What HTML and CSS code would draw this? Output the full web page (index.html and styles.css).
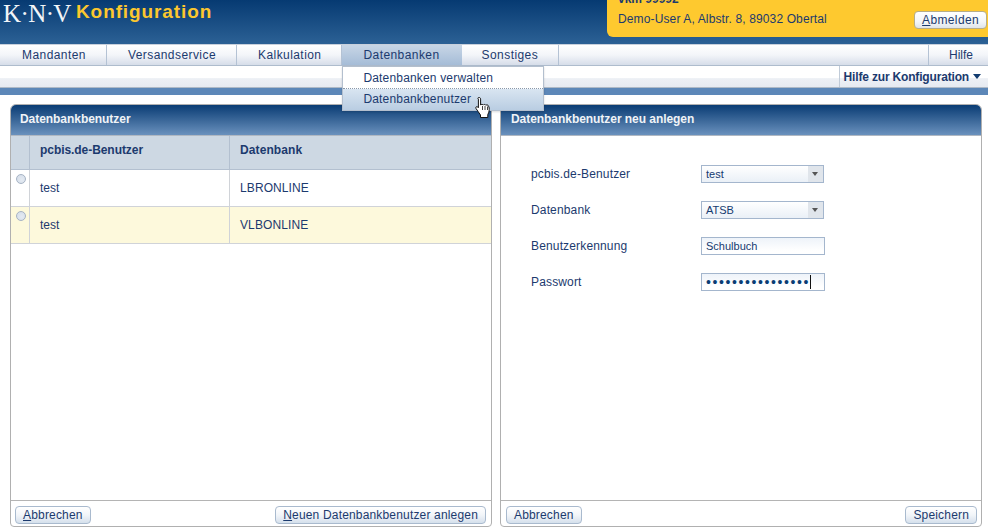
FILE: index.html
```html
<!DOCTYPE html>
<html lang="de">
<head>
<meta charset="utf-8">
<title>KNV Konfiguration</title>
<link rel="stylesheet" href="styles.css">
</head>
<body>
<div class="app">
  <header class="top">
    <div class="brand"><span class="logo">K·N·V</span><span class="title">Konfiguration</span></div>
    <div class="user">
      <div class="user-id">vkm 99992</div>
      <div class="user-row"><span>Demo-User A, Albstr. 8, 89032 Obertal</span><button class="btn logout"><u>A</u>bmelden</button></div>
    </div>
  </header>
  <nav class="nav">
    <div class="nav-item">Mandanten</div>
    <div class="nav-item">Versandservice</div>
    <div class="nav-item">Kalkulation</div>
    <div class="nav-item active">Datenbanken
      <div class="menu">
        <div class="menu-item">Datenbanken verwalten</div>
        <div class="menu-item hover">Datenbankbenutzer</div>
        <svg class="hand" width="17" height="24" viewBox="0 0 17 24"><path d="M4 1.500c1 0 1.600.6 1.600 1.600v6c.3-1 2.300-1 2.700 0 .3-.9 2.200-.9 2.600.2.500-.8 2.200-.6 2.500.6.800 1 1 3 .7 5-.2 1.500-.7 2.500-1.300 3.600v3H5.500v-2.500C4 17 2.500 14.500 1 12.500c-.8-1.200.6-2.500 1.800-1.500l.6.7V3.100C2.400 2.100 3 1.500 4 1.500z" fill="#fff" stroke="#111" stroke-width="1"/><path d="M7.500 10v4M10 10v4M12.500 10.500V14" stroke="#111" stroke-width=".8" fill="none"/></svg>
      </div>
    </div>
    <div class="nav-item">Sonstiges</div>
    <div class="nav-item help">Hilfe</div>
  </nav>
  <div class="subnav"><div class="sub-help">Hilfe zur Konfiguration<span class="caret"></span></div></div>
  <div class="strip"></div>
  <main class="main">
    <section class="panel left">
      <h2 class="panel-head">Datenbankbenutzer</h2>
      <div class="panel-body">
        <div class="row thead"><div class="c0"></div><div class="c1">pcbis.de-Benutzer</div><div class="c2">Datenbank</div></div>
        <div class="row"><div class="c0"><span class="radio"></span></div><div class="c1">test</div><div class="c2">LBRONLINE</div></div>
        <div class="row sel"><div class="c0"><span class="radio"></span></div><div class="c1">test</div><div class="c2">VLBONLINE</div></div>
      </div>
      <div class="panel-foot"><button class="btn"><u>A</u>bbrechen</button><button class="btn"><u>N</u>euen Datenbankbenutzer anlegen</button></div>
    </section>
    <section class="panel right">
      <h2 class="panel-head">Datenbankbenutzer neu anlegen</h2>
      <div class="panel-body form">
        <div class="lbl">pcbis.de-Benutzer</div>
        <div class="field select"><span class="val">test</span><span class="arrow"></span></div>
        <div class="lbl">Datenbank</div>
        <div class="field select"><span class="val">ATSB</span><span class="arrow"></span></div>
        <div class="lbl">Benutzerkennung</div>
        <div class="field text"><span class="val">Schulbuch</span></div>
        <div class="lbl">Passwort</div>
        <div class="field text focus"><span class="val dots">••••••••••••••••</span><span class="cursor"></span></div>
      </div>
      <div class="panel-foot"><button class="btn">Abbrechen</button><button class="btn">Speichern</button></div>
    </section>
  </main>
</div>
</body>
</html>
```
FILE: styles.css
```css
* { box-sizing: border-box; }
html, body { margin: 0; padding: 0; }
body { font-family: "Liberation Sans", Arial, sans-serif; font-size: 12px; color: #1c3a6e; background: #fff; overflow: hidden; }
.app { width: 988px; height: 527px; display: flex; flex-direction: column; overflow: hidden; }

.top { height: 44px; flex: none; display: flex; justify-content: space-between; align-items: flex-start; background: linear-gradient(#063a72, #2c6195); }
.brand { display: flex; align-items: flex-start; height: 30px; padding: 0 0 0 3px; }
.logo { font-family: "Liberation Serif", serif; font-size: 25px; line-height: 26px; padding-top: 1px; letter-spacing: -.6px; color: #f2f5f8; width: 73px; white-space: nowrap; }
.title { font-weight: bold; font-size: 19px; line-height: 24px; letter-spacing: .9px; color: #fcc72e; }
.user { width: 381px; height: 37px; background: #fec92f; border-bottom-left-radius: 6px; padding-left: 11px; overflow: hidden; }
.user-id { font-weight: bold; font-size: 12px; line-height: 14px; margin-top: -8px; color: #1c3a6e; }
.user-row { display: flex; justify-content: space-between; align-items: center; padding-right: 1px; margin-top: 5px; line-height: 18px; }
.user-row span { margin-top: -3px; letter-spacing: .13px; }

.nav { height: 22px; flex: none; display: flex; padding-left: 1px; background: linear-gradient(#fff 0, #f3f5f9 50%, #d6dde9 100%); border-top: 1px solid #c8d0dc; border-bottom: 1px solid #aebccd; }
.nav-item { padding: 0 20px 0 21px; line-height: 20px; border-right: 1px solid #b4c2d4; position: relative; font-size: 12px; letter-spacing: .43px; white-space: nowrap; }
.nav-item.active { background: linear-gradient(#c8d6e6, #a5bcd7); border-right: 0; padding-right: 22px; }
.nav-item.active + .nav-item { padding-left: 20px; }
.nav-item.help { margin-left: auto; border-right: 0; border-left: 1px solid #b4c2d4; padding: 0 15px 0 20px; letter-spacing: 0; }

.menu { position: absolute; left: 0; top: 21px; width: 202px; background: #fff; border: 1px solid #b3bfce; z-index: 5; letter-spacing: .17px; box-shadow: 0 1px 2px rgba(0,0,0,.15); }
.menu-item { height: 21px; padding-left: 20px; line-height: 20px; }
.menu-item:first-child { border-bottom: 1px dotted #8a98aa; height: 22px; line-height: 22px; }
.menu-item.hover { background: linear-gradient(#d9e5f1, #b9cde2); }
.hand { position: absolute; left: 132px; top: 29px; }

.subnav { height: 22px; flex: none; display: flex; justify-content: flex-end; background: linear-gradient(#fff 0, #fff 55%, #edf0f5 60%, #e6eaf1 100%); border-bottom: 1px solid #aeb9c6; }
.sub-help { border-left: 1px solid #c0cbd8; padding: 0 7px 0 4px; font-weight: bold; line-height: 23px; letter-spacing: -.17px; color: #1c3a6e; white-space: nowrap; }
.caret { display: inline-block; margin-left: 4px; border: 4.5px solid transparent; border-top: 5px solid #123c70; border-bottom: 0; vertical-align: 2px; }
.strip { height: 7px; flex: none; background: #5c87b8; }

.main { flex: 1; min-height: 0; display: flex; gap: 8px; padding: 9px 6px 0 10px; }
.panel { display: flex; flex-direction: column; border: 1px solid #b0b0b0; border-radius: 6px 6px 4px 4px; overflow: hidden; }
.panel.left { width: 482px; }
.panel.right { width: 482px; }
.panel-head { margin: 0; height: 30px; flex: none; padding-left: 9px; font-size: 12px; line-height: 28px; letter-spacing: -.05px; font-weight: bold; color: #f0f3f7; background: linear-gradient(#0a3c74, #6a91bd); }
.right .panel-head { padding-left: 10px; }
.panel-body { flex: 1; min-height: 0; border-top: 1px solid #b0b8c2; }
.panel-foot { height: 26px; flex: none; border-top: 1px solid #b4b4b4; display: flex; justify-content: space-between; align-items: flex-start; padding: 5px 5px 0 4px; }
.right .panel-foot { padding: 5px 4px 0 5px; }

.row { display: flex; height: 37px; border-bottom: 1px solid #d0d3d8; }
.row > div { line-height: 36px; padding-left: 10px; }
.c0 { width: 19px; flex: none; border-right: 1px solid #d0d3d8; position: relative; }
.c1 { width: 200px; flex: none; border-right: 1px solid #d0d3d8; }
.c2 { flex: 1; letter-spacing: .1px; }
.thead { height: 34px; background: #cdd8e3; border-bottom-color: #b3c0d0; font-weight: bold; letter-spacing: -.06px; }
.row.thead > div { line-height: 28px; border-right-color: #b3c0d0; }
.sel { background: #fdf9dc; }
.radio { position: absolute; left: 5px; top: 4px; width: 10px; height: 10px; border-radius: 50%; border: 1px solid #a6b3c4; background: radial-gradient(circle at 60% 60%, #e4eaf2, #d3dce8); }

.form { display: grid; grid-template-columns: 170px 124px; grid-auto-rows: 18px; row-gap: 18px; padding: 29px 0 0 30px; align-items: center; }
.lbl { letter-spacing: .15px; line-height: 18px; margin-top: -1px; }
.field { height: 18px; border: 1px solid #a4b6cd; background: linear-gradient(#eef3f9, #fff 80%); display: flex; align-items: center; padding-left: 4px; font-size: 11px; color: #153a70; }
.field.select { width: 123px; background: linear-gradient(#fff, #eaf0f7); }
.val { flex: 1; }
.arrow { width: 15px; height: 16px; flex: none; background: #e0e5eb; position: relative; }
.arrow::after { content: ""; position: absolute; left: 4px; top: 6px; border: 3.5px solid transparent; border-top: 4px solid #555; border-bottom: 0; }
.dots { font-size: 14px; letter-spacing: 1.6px; color: #0a3c74; line-height: 16px; white-space: nowrap; flex: none; }
.cursor { width: 1px; height: 14px; background: #111; flex: none; }

.btn { height: 18px; padding: 0 7px; border: 1px solid #a9bace; border-radius: 4px; background: linear-gradient(#fff, #f2f5f9 50%, #d5e0ec); font-family: "Liberation Sans", Arial, sans-serif; font-size: 12px; letter-spacing: .17px; line-height: 16px; color: #1c3a6e; white-space: nowrap; }
.logout { letter-spacing: .36px; background: linear-gradient(#fff, #f4f6f8 60%, #dfe4ea); border-color: #b5ad8a; }
```
